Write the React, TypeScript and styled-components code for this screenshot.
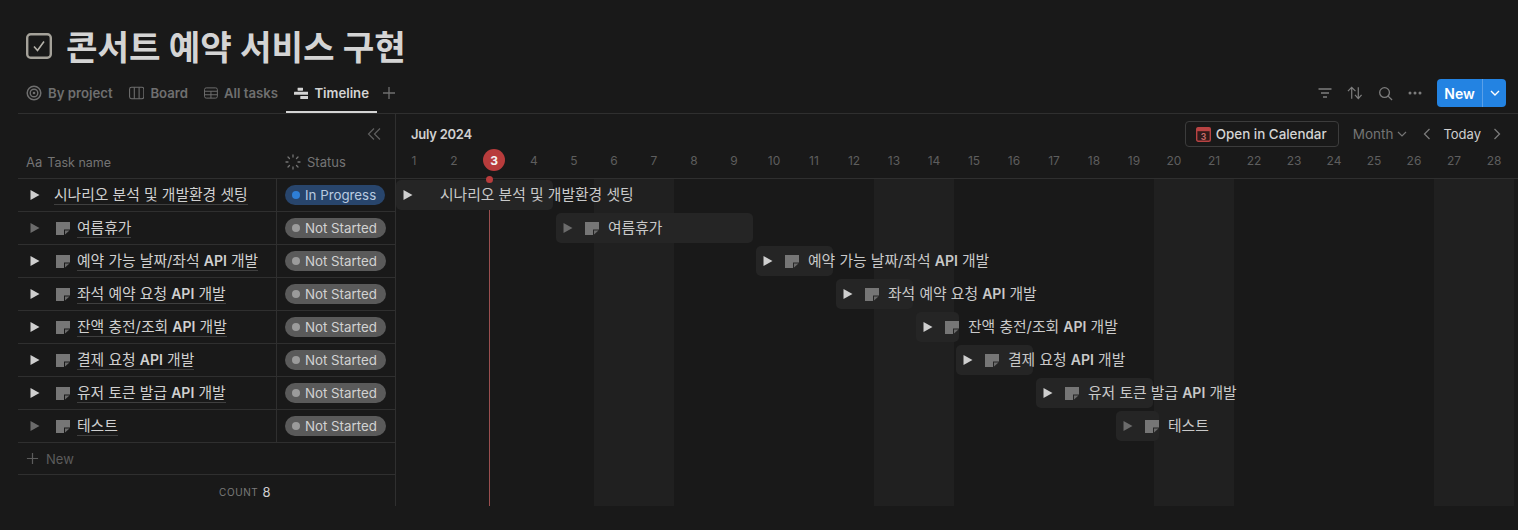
import React from "react";
import styled, { createGlobalStyle } from "styled-components";

const Global = createGlobalStyle`
  html, body { margin: 0; padding: 0; background: #191919; height: 100%; overflow: hidden; }
  body { font-family: Inter, "Noto Sans CJK KR", "Liberation Sans", sans-serif; }
  * { box-sizing: border-box; }
`;

const Page = styled.div`
  width: 1518px;
  height: 530px;
  padding: 26px 0 0 18px;
  display: flex;
  flex-direction: column;
  background: #191919;
  overflow: hidden;
`;
const TitleRow = styled.div`
  height: 40px;
  display: flex;
  align-items: center;
  gap: 14px;
  padding-left: 8px;
  margin-bottom: 12px;
`;
const Title = styled.h1`
  margin: 3px 0 0;
  font-size: 34.3px;
  line-height: 40px;
  font-weight: 700;
  color: #d4d4d4;
`;
const TabBar = styled.div`
  height: 36px;
  display: flex;
  align-items: flex-start;
  padding-left: 8px;
  padding-right: 12px;
  border-bottom: 1px solid #2f2f2f;
`;
const Tab = styled.div<{ $active?: boolean; $width: number }>`
  display: flex;
  align-items: center;
  gap: 6px;
  flex: none;
  width: ${(p) => p.$width}px;
  height: 35px;
  padding: 0 8px 3px;
  font-size: 13.2px;
  font-weight: 600;
  white-space: nowrap;
  color: ${(p) => (p.$active ? "#d4d4d4" : "#6f6f6f")};
  border-bottom: 2px solid ${(p) => (p.$active ? "#d4d4d4" : "transparent")};
  &:first-child { padding-left: 0; }
`;
const AddTab = styled.div`
  display: flex;
  align-items: center;
  height: 30px;
  padding-left: 5px;
  color: #6f6f6f;
`;
const TabTools = styled.div`
  margin-left: auto;
  display: flex;
  align-items: center;
  gap: 15px;
  color: #7d7d7d;
  height: 30px;
`;
const NewButton = styled.div`
  display: flex;
  height: 28px;
  width: 69px;
  border-radius: 4px;
  overflow: hidden;
  background: #2383e2;
  color: #fff;
  font-size: 14px;
  font-weight: 600;
`;
const NewLabel = styled.div`
  width: 46px;
  display: flex;
  align-items: center;
  justify-content: center;
  border-right: 1px solid #5aa0e8;
`;
const NewCaret = styled.div`
  flex: 1;
  display: flex;
  align-items: center;
  justify-content: center;
`;
const Board = styled.div`
  display: flex;
  height: 392px;
`;
const Left = styled.div`
  width: 378px;
  flex: none;
  border-right: 1px solid #2f2f2f;
  display: flex;
  flex-direction: column;
`;
const LeftHeader = styled.div`
  height: 65px;
  border-bottom: 1px solid #2f2f2f;
  display: flex;
  flex-direction: column;
  justify-content: space-between;
  padding-top: 14px;
  padding-bottom: 8px;
`;
const Collapse = styled.div`
  display: flex;
  justify-content: flex-end;
  padding-right: 14px;
  color: #5f5f5f;
`;
const HeadCols = styled.div`
  display: flex;
  align-items: center;
  font-size: 13px;
  color: #747474;
`;
const HeadName = styled.div`
  width: 259px;
  padding-left: 8px;
  display: flex;
  align-items: center;
  gap: 5px;
  font-size: 12.5px;
`;
const Aa = styled.span`
  font-size: 13px;
  font-weight: 400;
`;
const HeadStatus = styled.div`
  display: flex;
  align-items: center;
  gap: 6px;
  padding-left: 8px;
`;
const Row = styled.div`
  height: 33px;
  display: flex;
  border-bottom: 1px solid #2f2f2f;
`;
const NameCell = styled.div`
  width: 259px;
  flex: none;
  border-right: 1px solid #2f2f2f;
  display: flex;
  align-items: center;
  padding-left: 12px;
`;
const Arrow = styled.svg<{ $dim?: boolean }>`
  position: relative;
  flex: none;
  width: 10px;
  height: 10px;
  color: ${(p) => (p.$dim ? "#6b6b6b" : "#cfcfcf")};
`;
const NoteSlot = styled.span<{ $bare?: boolean }>`
  display: flex;
  margin-left: ${(p) => (p.$bare ? "14px" : "16px")};
  margin-right: ${(p) => (p.$bare ? "0" : "7px")};
`;
const TaskLink = styled.span`
  font-size: 14.8px;
  line-height: 18px;
  font-weight: 400;
  color: #d0d0d0;
  border-bottom: 1px solid #3f3f3f;
  white-space: nowrap;
`;
const Strong = styled.span`
  font-weight: 600;
  font-size: 14px;
`;
const StatusCell = styled.div`
  flex: 1;
  display: flex;
  align-items: center;
  padding-left: 8px;
`;
const Pill = styled.div<{ $on?: boolean }>`
  height: 20px;
  display: flex;
  align-items: center;
  gap: 5px;
  padding: 0 9px 0 7px;
  border-radius: 10px;
  font-size: 13.3px;
  white-space: nowrap;
  color: ${(p) => (p.$on ? "#b9cbe0" : "#d2d2d2")};
  background: ${(p) => (p.$on ? "#28456c" : "#5a5a5a")};
`;
const Dot = styled.span<{ $on?: boolean }>`
  width: 8px;
  height: 8px;
  border-radius: 50%;
  background: ${(p) => (p.$on ? "#2e7ed6" : "#9b9b9b")};
`;
const NewRow = styled.div`
  height: 32px;
  display: flex;
  align-items: center;
  gap: 7px;
  padding-left: 8px;
  font-size: 13px;
  color: #5c5c5c;
  border-bottom: 1px solid #2f2f2f;
`;
const CountRow = styled.div`
  flex: 1;
  display: flex;
  align-items: center;
  gap: 4px;
  padding-left: 201px;
  padding-top: 3px;
`;
const CountLabel = styled.span`
  font-size: 10px;
  letter-spacing: 0.6px;
  color: #7a7a7a;
`;
const CountValue = styled.span`
  font-size: 13px;
  color: #cfcfcf;
`;
const Right = styled.div`
  position: relative;
  flex: 1;
  min-width: 0;
  overflow: hidden;
  display: flex;
  flex-direction: column;
`;
const RightHeader = styled.div`
  height: 65px;
  flex: none;
  border-bottom: 1px solid #2f2f2f;
  display: flex;
  flex-direction: column;
`;
const MonthRow = styled.div`
  height: 36px;
  display: flex;
  align-items: center;
  padding: 4px 17px 0 15px;
`;
const MonthName = styled.div`
  font-size: 13px;
  font-weight: 600;
  letter-spacing: -0.25px;
  color: #d0d0d0;
  margin-right: auto;
`;
const CalButton = styled.div`
  height: 26px;
  width: 154px;
  border: 1px solid #3c3c3c;
  border-radius: 4px;
  display: flex;
  align-items: center;
  gap: 5px;
  padding-left: 10px;
  font-size: 13.4px;
  font-weight: 500;
  white-space: nowrap;
  color: #d4d4d4;
  margin-right: 14px;
`;
const MonthSelect = styled.div`
  display: flex;
  align-items: center;
  gap: 4px;
  font-size: 13.5px;
  color: #747474;
  margin-right: 16px;
`;
const Today = styled.div`
  font-size: 13px;
  color: #cfcfcf;
  margin: 0 12px 0 12px;
`;
const DaysRow = styled.div`
  display: flex;
  margin-left: -2px;
`;
const Day = styled.div`
  position: relative;
  width: 40px;
  flex: none;
  height: 20px;
  display: flex;
  align-items: center;
  justify-content: center;
  font-size: 12px;
  color: #5e5e5e;
`;
const TodayBadge = styled.div`
  width: 22px;
  height: 22px;
  border-radius: 50%;
  background: #b83c3c;
  color: #f3f3f3;
  font-weight: 700;
  display: flex;
  align-items: center;
  justify-content: center;
`;
const Bands = styled.div`
  position: absolute;
  top: 65px;
  bottom: 0;
  left: -2px;
  display: flex;
`;
const Band = styled.div<{ $weekend: boolean }>`
  width: 40px;
  flex: none;
  background: ${(p) => (p.$weekend ? "#202020" : "transparent")};
`;
const TodayLine = styled.div`
  position: absolute;
  left: 93px;
  top: 65px;
  bottom: 0;
  width: 1px;
  background: #9a4f4f;
`;
const TodayDot = styled.div`
  position: absolute;
  left: 90px;
  top: 62px;
  width: 7px;
  height: 7px;
  border-radius: 50%;
  background: #b83c3c;
  z-index: 3;
`;
const Track = styled.div`
  position: relative;
  z-index: 2;
  display: flex;
  flex-direction: column;
  padding-top: 1px;
`;
const TrackRow = styled.div`
  height: 33px;
  padding-bottom: 3px;
`;
const BarWrap = styled.div<{ $x: number }>`
  position: relative;
  height: 30px;
  margin-left: ${(p) => p.$x}px;
  display: flex;
  align-items: center;
  padding-left: 7px;
`;
const BarFill = styled.div<{ $w: number }>`
  position: absolute;
  left: 0;
  top: 0;
  bottom: 0;
  width: ${(p) => p.$w}px;
  background: #252525;
  border-radius: 5px;
`;
const BarNote = styled.span<{ $bare?: boolean }>`
  position: relative;
  display: flex;
  margin-left: ${(p) => (p.$bare ? "27px" : "12px")};
  margin-right: ${(p) => (p.$bare ? "0" : "9px")};
`;
const BarText = styled.span`
  position: relative;
  font-size: 14.8px;
  line-height: 18px;
  font-weight: 400;
  color: #c9c9c9;
  white-space: nowrap;
  margin-top: -1px;
`;

const Triangle = ({ dim }: { dim?: boolean }) => (
  <Arrow $dim={dim} viewBox="0 0 10 10"><path d="M0.5 0 L9.5 5 L0.5 10 Z" fill="currentColor" /></Arrow>
);
const NoteIcon = () => (
  <svg width="14" height="13" viewBox="0 0 14 13">
    <path d="M0 0 H14 V7.5 H8 V13 H0 Z" fill="#767676" />
    <path d="M9 8.5 H13.5 L9 12.5 Z" fill="#6a6a6a" />
  </svg>
);
const TaskName = ({ name }: { name: string }) => {
  const parts = name.split("API");
  return parts.length > 1 ? (
    <>{parts[0]}<Strong>API</Strong>{parts[1]}</>
  ) : (
    <>{name}</>
  );
};

const tasks = [
  { name: "시나리오 분석 및 개발환경 셋팅", status: "In Progress", bare: true, x: 0, w: 157 },
  { name: "여름휴가", status: "Not Started", dim: true, x: 160, w: 197 },
  { name: "예약 가능 날짜/좌석 API 개발", status: "Not Started", x: 360, w: 77 },
  { name: "좌석 예약 요청 API 개발", status: "Not Started", x: 440, w: 77 },
  { name: "잔액 충전/조회 API 개발", status: "Not Started", x: 520, w: 43 },
  { name: "결제 요청 API 개발", status: "Not Started", x: 560, w: 77 },
  { name: "유저 토큰 발급 API 개발", status: "Not Started", x: 640, w: 117 },
  { name: "테스트", status: "Not Started", dim: true, x: 720, w: 43 },
];
const days = Array.from({ length: 28 }, (_, i) => i + 1);
const weekend = (d: number) => d % 7 === 6 || d % 7 === 0;

export default function App() {
  return (
    <Page>
      <Global />
      <TitleRow>
        <svg width="26" height="26" viewBox="0 0 26 26" fill="none">
          <rect x="1.2" y="1.2" width="23.6" height="23.6" rx="3.5" stroke="#a5a29a" strokeWidth="2.4" />
          <path d="M8 13.5 L11.5 17.5 L18 8.5" stroke="#b5b2aa" strokeWidth="1.6" />
        </svg>
        <Title>콘서트 예약 서비스 구현</Title>
      </TitleRow>
      <TabBar>
        <Tab $width={95}>
          <svg width="16" height="16" viewBox="0 0 16 16" fill="none" stroke="currentColor">
            <circle cx="8" cy="8" r="6.8" strokeWidth="1.5" />
            <circle cx="8" cy="8" r="3.8" strokeWidth="1.4" />
            <circle cx="8" cy="8" r="1.3" fill="currentColor" stroke="none" />
          </svg>
          By project
        </Tab>
        <Tab $width={75}>
          <svg width="16" height="14" viewBox="0 0 16 14" fill="none" stroke="currentColor" strokeWidth="1.1">
            <rect x="0.6" y="1.1" width="14.8" height="11.8" rx="2" />
            <path d="M5.5 1 V13 M10.5 1 V13" />
          </svg>
          Board
        </Tab>
        <Tab $width={90}>
          <svg width="16" height="14" viewBox="0 0 16 14" fill="none" stroke="currentColor" strokeWidth="1.1">
            <rect x="0.6" y="1.1" width="14.8" height="11.8" rx="2" />
            <path d="M0.6 5 H15.4 M0.6 9 H15.4 M8 5 V13" />
          </svg>
          All tasks
        </Tab>
        <Tab $active $width={91}>
          <svg width="16" height="13" viewBox="0 0 16 13" fill="currentColor">
            <rect x="4" y="0" width="6" height="3.4" rx="0.4" />
            <rect x="0" y="4.6" width="16" height="3.4" rx="0.4" />
            <rect x="7" y="9.2" width="9" height="3.4" rx="0.4" />
          </svg>
          Timeline
        </Tab>
        <AddTab>
          <svg width="14" height="14" viewBox="0 0 14 14" stroke="currentColor" strokeWidth="1.3">
            <path d="M7 1 V13 M1 7 H13" />
          </svg>
        </AddTab>
        <TabTools>
          <svg width="14" height="12" viewBox="0 0 14 12" fill="none" stroke="currentColor" strokeWidth="1.3">
            <path d="M0.5 2 H13.5 M3 6 H11 M5 10 H9" />
          </svg>
          <svg width="16" height="14" viewBox="0 0 17 14" fill="none" stroke="currentColor" strokeWidth="1.3">
            <path d="M5 13 V1.2 M1 5 L5 1 L9 5 M12 1 V12.8 M8.5 9 L12 13 L15.5 9" />
          </svg>
          <svg width="15" height="15" viewBox="0 0 16 16" fill="none" stroke="currentColor" strokeWidth="1.4">
            <circle cx="7" cy="7" r="5.2" />
            <path d="M10.8 10.8 L15 15" />
          </svg>
          <svg width="14" height="4" viewBox="0 0 14 4" fill="currentColor">
            <circle cx="2" cy="2" r="1.5" />
            <circle cx="7" cy="2" r="1.5" />
            <circle cx="12" cy="2" r="1.5" />
          </svg>
          <NewButton>
            <NewLabel>New</NewLabel>
            <NewCaret>
              <svg width="10" height="6" viewBox="0 0 10 6" fill="none" stroke="#fff" strokeWidth="1.4">
                <path d="M1 1 L5 5 L9 1" />
              </svg>
            </NewCaret>
          </NewButton>
        </TabTools>
      </TabBar>
      <Board>
        <Left>
          <LeftHeader>
            <Collapse>
              <svg width="14" height="12" viewBox="0 0 14 12" fill="none" stroke="currentColor" strokeWidth="1.2">
                <path d="M7 0.5 L1.5 6 L7 11.5 M13 0.5 L7.5 6 L13 11.5" />
              </svg>
            </Collapse>
            <HeadCols>
              <HeadName><Aa>Aa</Aa>Task name</HeadName>
              <HeadStatus>
                <svg width="16" height="16" viewBox="0 0 16 16" stroke="currentColor" strokeWidth="1.3" fill="none" strokeLinecap="round">
                  <path d="M8 1 V3 M8 13 V15 M1 8 H3 M13 8 H15 M3 3 L4.5 4.5 M11.5 11.5 L13 13 M13 3 L11.5 4.5 M4.5 11.5 L3 13" />
                </svg>
                Status
              </HeadStatus>
            </HeadCols>
          </LeftHeader>
          {tasks.map((t) => (
            <Row key={t.name}>
              <NameCell>
                <Triangle dim={t.dim} />
                {t.bare ? <NoteSlot $bare /> : <NoteSlot><NoteIcon /></NoteSlot>}
                <TaskLink><TaskName name={t.name} /></TaskLink>
              </NameCell>
              <StatusCell>
                <Pill $on={t.bare}>
                  <Dot $on={t.bare} />
                  {t.status}
                </Pill>
              </StatusCell>
            </Row>
          ))}
          <NewRow>
            <svg width="13" height="13" viewBox="0 0 14 14" stroke="currentColor" strokeWidth="1.3">
              <path d="M7 1 V13 M1 7 H13" />
            </svg>
            New
          </NewRow>
          <CountRow>
            <CountLabel>COUNT</CountLabel>
            <CountValue>8</CountValue>
          </CountRow>
        </Left>
        <Right>
          <Bands>
            {days.map((d) => <Band key={d} $weekend={weekend(d)} />)}
          </Bands>
          <TodayLine />
          <TodayDot />
          <RightHeader>
            <MonthRow>
              <MonthName>July 2024</MonthName>
              <CalButton>
                <svg width="15" height="15" viewBox="0 0 15 15">
                  <rect x="0.7" y="0.7" width="13.6" height="13.6" rx="1.5" fill="#301a1a" stroke="#b84343" strokeWidth="1.4" />
                  <rect x="0.7" y="0.7" width="13.6" height="3.5" fill="#b84343" />
                  <text x="7.5" y="12.6" textAnchor="middle" fontSize="8.5" fontWeight="700" fill="#c86a6a">3</text>
                </svg>
                Open in Calendar
              </CalButton>
              <MonthSelect>
                Month
                <svg width="10" height="6" viewBox="0 0 10 6" fill="none" stroke="currentColor" strokeWidth="1.2">
                  <path d="M1 1 L5 5 L9 1" />
                </svg>
              </MonthSelect>
              <svg width="8" height="12" viewBox="0 0 8 12" fill="none" stroke="#7a7a7a" strokeWidth="1.3">
                <path d="M6.5 1 L1.5 6 L6.5 11" />
              </svg>
              <Today>Today</Today>
              <svg width="8" height="12" viewBox="0 0 8 12" fill="none" stroke="#7a7a7a" strokeWidth="1.3">
                <path d="M1.5 1 L6.5 6 L1.5 11" />
              </svg>
            </MonthRow>
            <DaysRow>
              {days.map((d) => (
                <Day key={d}>{d === 3 ? <TodayBadge>3</TodayBadge> : d}</Day>
              ))}
            </DaysRow>
          </RightHeader>
          <Track>
            {tasks.map((t) => (
              <TrackRow key={t.name}>
                <BarWrap $x={t.x}>
                  <BarFill $w={t.w} />
                  <Triangle dim={t.dim} />
                  {t.bare ? <BarNote $bare /> : <BarNote><NoteIcon /></BarNote>}
                  <BarText><TaskName name={t.name} /></BarText>
                </BarWrap>
              </TrackRow>
            ))}
          </Track>
        </Right>
      </Board>
    </Page>
  );
}
